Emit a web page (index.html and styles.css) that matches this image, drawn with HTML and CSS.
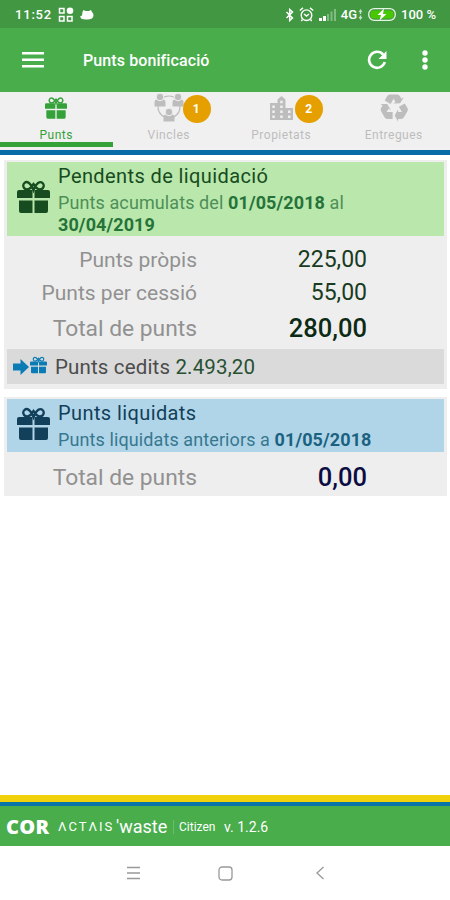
FILE: index.html
```html
<!DOCTYPE html>
<html lang="ca">
<head>
  <meta charset="utf-8">
  <title>Punts bonificació</title>
  <link rel="stylesheet" href="styles.css">
</head>
<body>
  <!-- shared gift icon -->
  <svg class="defs" width="0" height="0">
    <symbol id="gift" viewBox="0 0 33 34">
      <path d="M2 10h13.500v8H0v-6q0-2 2-2zM17.500 10H31q2 0 2 2v6H17.500zM2 20.500h13.500V33H4q-2 0-2-2zM17.500 20.500H31V31q0 2-2 2H17.500z"/>
      <path d="M16.500 10C14 3 10 .8 7.600 2.800C5 5 6.500 9.500 10 9.500C13.500 9.500 15 6 16.500 4C18 6 19.500 9.500 23 9.500C26.500 9.500 28 5 25.400 2.800C23 .8 19 3 16.500 10z" fill="none" stroke="currentColor" stroke-width="2.300"/>
    </symbol>
  </svg>

  <div class="status-bar">
    <span class="time">11:52</span>
    <svg class="status-apps" width="16" height="16" viewBox="0 0 16 16">
      <path d="M1.500 1.500h4.500v4.500h-4.500zM1.500 9.500h4.500v4.500h-4.500zM9.500 9.500h4.500v4.500h-4.500z" fill="none" stroke="#fff" stroke-width="1.500"/>
      <circle cx="12" cy="3.800" r="3.300"/>
    </svg>
    <svg class="status-cat" width="14" height="12" viewBox="0 0 14 12">
      <path d="M2.500 3L3.500 1L5.500 2H9L11 1L12 3Q15 6 12 9.500Q9 11 4 10.300Q1 10.500 0 7.500L2 6.500z"/>
    </svg>
    <div class="status-right">
      <svg class="bluetooth" width="10" height="14" viewBox="0 0 10 14">
        <path d="M1.500 4l6 6L4.700 12.500v-11L7.500 4l-6 6" fill="none" stroke="#fff" stroke-width="1.500"/>
      </svg>
      <svg class="alarm" width="15" height="15" viewBox="0 0 15 15">
        <g fill="none" stroke="#fff" stroke-width="1.400">
          <circle cx="7.500" cy="8.200" r="5.300"/>
          <path d="M.8 3.500L4 .9M14.200 3.500L11 .9M5 7l2.500 2L10 7M3.500 12.500L2.300 14M11.500 12.500l1.200 1.500"/>
        </g>
      </svg>
      <svg class="signal" width="17" height="12" viewBox="0 0 17 12">
        <path d="M0 9h3v3H0zM4 7h3v5H4z"/>
        <path d="M8 5h2v7H8zM11.500 2.500h2V12h-2zM15 0h2v12h-2z" opacity=".35"/>
      </svg>
      <span class="network">4G</span>
      <svg class="data" width="5" height="12" viewBox="0 0 5 12"><path d="M2.500 0L4.500 3H3.200v2H1.800V3H.5zM1.800 6.500h1.400v1.500h1.300l-2 3l-2-3h1.300z" opacity=".7"/></svg>
      <svg class="battery" width="28" height="13" viewBox="0 0 28 13">
        <rect x=".7" y=".7" width="26.600" height="11.600" rx="5.500" fill="none" stroke="#e4f5e2" stroke-width="1.300"/>
        <rect x="2.500" y="2.500" width="23" height="8" rx="3.500" fill="#48c800"/>
        <path d="M16 .5L9.500 7H13l-1.500 5.500L18.500 6H15z"/>
      </svg>
      <span class="percent">100 %</span>
    </div>
  </div>

  <header class="app-bar">
    <svg class="menu" width="22" height="18" viewBox="0 0 22 18"><path d="M0 1h22v2.600H0zM0 7.400h22V10H0zM0 14h22v2.600H0z"/></svg>
    <h1>Punts bonificació</h1>
    <svg class="refresh" width="20" height="20" viewBox="0 0 20 20">
      <path d="M16.200 4.600A8 8 0 1 0 17.800 12" fill="none" stroke="#fff" stroke-width="2.600"/>
      <path d="M19.500 1v8h-8z"/>
    </svg>
    <svg class="more" width="6" height="20" viewBox="0 0 6 20"><circle cx="3" cy="3" r="2.700"/><circle cx="3" cy="10" r="2.700"/><circle cx="3" cy="17" r="2.700"/></svg>
  </header>

  <nav class="tabs">
    <div class="tab active">
      <svg width="22" height="22"><use href="#gift"/></svg>
      <span>Punts</span>
    </div>
    <div class="tab">
      <svg width="30" height="30" viewBox="0 0 30 30">
        <circle cx="15" cy="14" r="11" fill="none" stroke="currentColor" stroke-width="1.200"/>
        <g id="person">
          <path d="M.5 13.500V9.500q0-3 2.500-3h6q2.500 0 2.500 3v4z"/>
          <circle cx="6" cy="4" r="3.800" stroke="#f0f0f0"/>
        </g>
        <use href="#person" x="18"/>
        <use href="#person" x="9" y="15"/>
      </svg>
      <span>Vincles</span>
      <b class="badge">1</b>
    </div>
    <div class="tab">
      <svg width="23" height="24" viewBox="0 0 23 24">
        <path fill-rule="evenodd" d="M0 7h7.500V3.500L11.500 0l4 3.500V12H23v12H0zM2.300 9.500v2.500h2.500V9.500zM2.300 14.500V17h2.500v-2.500zM2.300 19.500V22h2.500v-2.500zM10.200 4.800v2.500h2.500V4.800zM10.200 9.500V12h2.500V9.500zM10.200 14.500V17h2.500v-2.500zM10.200 19.500V22h2.500v-2.500zM18 14.500V17h2.500v-2.500zM18 19.500V22h2.500v-2.500z"/>
      </svg>
      <span>Propietats</span>
      <b class="badge">2</b>
    </div>
    <div class="tab">
      <svg width="30" height="30" viewBox="1 2 22 22">
        <path d="M21.820 15.420L19.320 19.750C18.830 20.610 17.920 21.060 17 21H15V23L12.500 18.500L15 14V16H17.820L15.600 12.150L19.930 9.650L21.730 12.770C22.250 13.540 22.320 14.570 21.820 15.420M9.210 3.060H14.210C15.190 3.060 16.040 3.630 16.450 4.450L17.450 6.190L19.180 5.190L16.540 9.600L11.390 9.690L13.120 8.690L11.710 6.240L9.500 10.090L5.160 7.590L6.960 4.470C7.370 3.640 8.220 3.060 9.210 3.060M5.050 19.760L2.550 15.430C2.060 14.580 2.130 13.560 2.640 12.790L3.640 11.060L1.910 10.060L7.050 10.140L9.700 14.560L7.970 13.560L6.560 16H11V21H7.400C6.470 21.070 5.550 20.610 5.050 19.760Z"/>
      </svg>
      <span>Entregues</span>
    </div>
  </nav>

  <main>
    <section class="card">
      <div class="card-header green">
        <svg class="gift" width="33" height="34"><use href="#gift"/></svg>
        <div>
          <h2>Pendents de liquidació</h2>
          <p>Punts acumulats del <b>01/05/2018</b> al<br><b>30/04/2019</b></p>
        </div>
      </div>
      <div class="rows">
        <div class="row"><span class="label">Punts pròpis</span><span class="value">225,00</span></div>
        <div class="row"><span class="label">Punts per cessió</span><span class="value">55,00</span></div>
        <div class="row total"><span class="label">Total de punts</span><span class="value">280,00</span></div>
      </div>
      <div class="ceded">
        <svg class="arrow" width="16" height="16" viewBox="0 0 16 16"><path d="M0 4.500h7.500V0L16 8l-8.500 8v-4.500H0z"/></svg>
        <svg class="small-gift" width="17" height="18"><use href="#gift"/></svg>
        <span>Punts cedits <em>2.493,20</em></span>
      </div>
    </section>

    <section class="card last">
      <div class="card-header blue">
        <svg class="gift" width="33" height="34"><use href="#gift"/></svg>
        <div>
          <h2>Punts liquidats</h2>
          <p>Punts liquidats anteriors a <b>01/05/2018</b></p>
        </div>
      </div>
      <div class="row total settled"><span class="label">Total de punts</span><span class="value">0,00</span></div>
    </section>
  </main>

  <footer class="brand">
    <span class="cor">COR</span>
    <span class="actais">ΛCTΛIS</span>
    <span class="waste">'waste</span>
    <span class="citizen">Citizen</span>
    <span class="version">v. 1.2.6</span>
  </footer>

  <div class="nav-bar">
    <svg width="13" height="14" viewBox="0 0 13 14"><path d="M0 1.500h13M0 7h13M0 12.500h13"/></svg>
    <svg width="15" height="15" viewBox="0 0 15 15"><rect x="1" y="1" width="13" height="13" rx="3"/></svg>
    <svg width="8" height="14" viewBox="0 0 8 14"><path d="M7.500 1L1 7l6.500 6"/></svg>
  </div>
</body>
</html>
```
FILE: styles.css
```css
* {
  box-sizing: border-box;
}

body {
  margin: 0;
  height: 900px;
  display: flex;
  flex-direction: column;
  background-color: #fff;
  font-family: Roboto, sans-serif;
  overflow: hidden;
}

h1, h2, p {
  margin: 0;
  font-weight: normal;
}

svg {
  display: block;
  flex: none;
  fill: currentColor;
}

.defs {
  position: absolute;
}

.status-bar {
  display: flex;
  align-items: center;
  height: 28px;
  padding: 1px 14px 0 15px;
  background-color: #419742;
  color: #fff;
  font-size: 13px;
  font-weight: 500;
}

.time {
  width: 43px;
  letter-spacing: 0.8px;
}

.status-cat {
  margin-left: 6px;
}

.status-right {
  display: flex;
  align-items: center;
  margin-left: auto;
}

.bluetooth {
  margin-right: 4px;
}

.signal {
  margin: 0 5px;
}

.data {
  margin: 0 5px 0 1px;
}

.percent {
  margin-left: 5px;
  width: 35px;
  white-space: nowrap;
  font-size: 13px;
}

.app-bar {
  display: flex;
  align-items: center;
  height: 64px;
  padding: 0 22px;
  background-color: #49ad4c;
  color: #fff;
}

.app-bar h1 {
  margin-left: 39px;
  font-size: 16px;
  font-weight: 500;
  letter-spacing: 0.1px;
}

.refresh {
  margin-left: auto;
}

.more {
  margin-left: 35px;
}

.tabs {
  display: flex;
  height: 63px;
  background-color: #f0f0f0;
  border-bottom: 5px solid #096ba8;
}

.tab {
  position: relative;
  width: 113px;
  height: 55px;
  display: flex;
  flex-direction: column;
  align-items: center;
  color: #bdbdbd;
  font-size: 12px;
  letter-spacing: 0.5px;
}

.tab svg {
  height: 32px;
}

.tab span {
  margin-top: 3px;
  line-height: 16px;
}

.tab.active {
  color: #35a139;
  border-bottom: 5px solid #35a139;
}

.badge {
  position: absolute;
  left: 70px;
  top: 3px;
  width: 28px;
  height: 28px;
  border-radius: 50%;
  background-color: #e5a000;
  color: #fff;
  font-size: 12px;
  line-height: 28px;
  text-align: center;
}

main {
  flex: 1;
  padding: 5px 3px 0 4px;
}

.card {
  margin-bottom: 8px;
  padding: 2px 3px 5px;
  background-color: #eee;
}

.card.last {
  padding-bottom: 0;
}

.card-header {
  display: flex;
  align-items: center;
  padding-left: 10px;
}

.card-header h2 {
  font-size: 20px;
  line-height: 26px;
  letter-spacing: 0.4px;
}

.card-header p {
  margin-top: 3px;
  font-size: 18px;
  line-height: 22px;
  letter-spacing: 0.1px;
}

.gift {
  margin: 0 8px 4px 0;
}

.green {
  height: 74px;
  background-color: #bae7ab;
  color: #164c20;
}

.green p {
  color: #4d8f57;
}

.green b {
  color: #26733a;
}

.blue {
  height: 53px;
  background-color: #b0d5e8;
  color: #123f59;
}

.blue p {
  color: #37788f;
}

.blue b {
  color: #1b6280;
}

.rows {
  padding-top: 7px;
}

.row {
  display: flex;
  align-items: center;
  height: 33px;
  font-size: 21px;
}

.label {
  width: 190px;
  text-align: right;
  color: #919191;
}

.value {
  width: 170px;
  text-align: right;
  font-size: 23px;
  color: #183b22;
}

.total {
  height: 38px;
  font-size: 22.800px;
}

.total .value {
  font-size: 25.500px;
  font-weight: 500;
  color: #0c2a14;
}

.settled {
  height: 44px;
  padding-top: 6px;
}

.settled .value {
  color: #0b0d42;
}

.ceded {
  display: flex;
  align-items: center;
  height: 35px;
  margin-top: 2px;
  padding-left: 6px;
  background-color: #dadada;
  color: #0b7bb5;
  font-size: 20.500px;
  letter-spacing: 0.150px;
}

.small-gift {
  margin: 0 8px 3px 1px;
}

.ceded span {
  color: #4c4c4c;
}

.ceded em {
  font-style: normal;
  color: #285033;
}

.brand {
  display: flex;
  align-items: center;
  height: 51px;
  padding: 5px 0 0 6px;
  border-top: 7px solid #f0d10c;
  box-shadow: inset 0 4px #0875a8;
  background-color: #49ad4c;
  color: #fff;
  white-space: nowrap;
}

.cor {
  width: 52px;
  font-family: "Open Sans", sans-serif;
  font-size: 20px;
  font-weight: 800;
  letter-spacing: 0.300px;
}

.actais {
  width: 58px;
  font-size: 13px;
  letter-spacing: 2px;
}

.waste {
  width: 57px;
  font-size: 18px;
}

.citizen {
  width: 46px;
  padding-left: 5px;
  border-left: 1px solid #6dbd6f;
  font-size: 12px;
}

.version {
  margin-left: 5px;
  font-size: 14px;
}

.nav-bar {
  display: flex;
  align-items: center;
  height: 54px;
  padding-left: 127px;
}

.nav-bar svg {
  fill: none;
  stroke: #999;
  stroke-width: 1.300;
}

.nav-bar svg + svg {
  margin-left: 78px;
}

.nav-bar svg:last-child {
  margin-left: 83px;
}
```
